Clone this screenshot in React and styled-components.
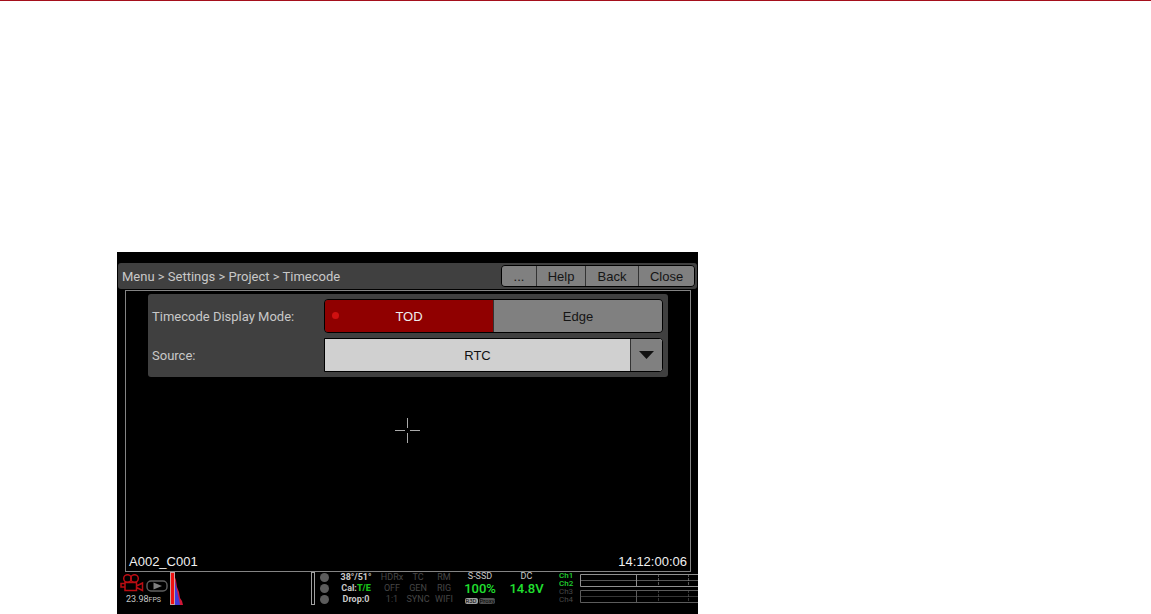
import styled, { createGlobalStyle, css } from "styled-components"

export default function App(){
    return(
        <Page>
            <GlobalStyle/>
            <Monitor>
                <TitleBar>
                    <h1>Menu &gt; Settings &gt; Project &gt; Timecode</h1>
                    <NavButtons>
                        <NavButton $width="34px">...</NavButton>
                        <NavButton $width="48px">Help</NavButton>
                        <NavButton $width="52px">Back</NavButton>
                        <NavButton $width="55px">Close</NavButton>
                    </NavButtons>
                </TitleBar>
                <Frame>
                    <Settings>
                        <Label id="mode">Timecode Display Mode:</Label>
                        <Modes role="group" aria-labelledby="mode">
                            <ModeButton $active aria-pressed="true"><Led/>TOD</ModeButton>
                            <ModeButton aria-pressed="false">Edge</ModeButton>
                        </Modes>
                        <Label as="label" htmlFor="source">Source:</Label>
                        <SelectBox>
                            <Select id="source" defaultValue="RTC">
                                <option>RTC</option>
                            </Select>
                            <ArrowBox>
                                <svg width="15" height="8" viewBox="0 0 15 8"><path d="M0 0H15L7.5 8Z" fill="#111"/></svg>
                            </ArrowBox>
                        </SelectBox>
                    </Settings>
                    <Crosshair/>
                    <ClipInfo>
                        <span>A002_C001</span>
                        <span>14:12:00:06</span>
                    </ClipInfo>
                </Frame>
                <StatusBar>
                    <Media>
                        <div>
                            <CameraIcon/>
                            <PlayIcon/>
                        </div>
                        <p>23.98<small>FPS</small></p>
                    </Media>
                    <Histogram/>
                    <Dots>
                        <i/>
                        <i/>
                        <i/>
                    </Dots>
                    <Column $bold>
                        <span>38°/51°</span>
                        <span>Cal:<Green>T/E</Green></span>
                        <span>Drop:0</span>
                    </Column>
                    <Column $dim>
                        <span>HDRx</span>
                        <span>OFF</span>
                        <span>1:1</span>
                    </Column>
                    <Column $dim>
                        <span>TC</span>
                        <span>GEN</span>
                        <span>SYNC</span>
                    </Column>
                    <Column $dim>
                        <span>RM</span>
                        <span>RIG</span>
                        <span>WIFI</span>
                    </Column>
                    <Reading>
                        <span>S-SSD</span>
                        <strong>100%</strong>
                        <Badges>
                            <Badge $on>R3D</Badge>
                            <Badge>Proxy</Badge>
                        </Badges>
                    </Reading>
                    <Reading>
                        <span>DC</span>
                        <strong>14.8V</strong>
                    </Reading>
                    <Channels>
                        <Channel $on>Ch1</Channel>
                        <Channel $on>Ch2</Channel>
                        <Channel>Ch3</Channel>
                        <Channel>Ch4</Channel>
                    </Channels>
                    <Meters>
                        <Meter color="#909090"/>
                        <Meter color="#5c5c5c"/>
                    </Meters>
                </StatusBar>
            </Monitor>
        </Page>
    )
}

function CameraIcon(){
    return(
        <svg width="24" height="18" viewBox="0 0 24 18" fill="none" stroke="#b80c12" strokeWidth="1.5">
            <circle cx="7.5" cy="4.5" r="3.8"/>
            <circle cx="14.5" cy="4.5" r="3.8"/>
            <path d="M5 8.5V16.5H16.5V8.5Z M5 9.5H1V13H5 M16.5 12L22.5 9V16.5L16.5 13.5"/>
        </svg>
    )
}

function PlayIcon(){
    return(
        <svg width="22" height="12" viewBox="0 0 22 12">
            <rect x="1" y="1" width="20" height="10" rx="4" fill="none" stroke="#606060" strokeWidth="1.4"/>
            <path d="M7.5 2.5L16 6L7.5 9.5Z" fill="#808080"/>
        </svg>
    )
}

function Histogram(){
    return(
        <svg width="146" height="34" viewBox="0 0 146 34">
            <path d="M4 3L6 8L7 15L9 20L10 26L12 29L13 33H4Z" fill="#d01838"/>
            <path d="M4 4L5 9L6 14L7 18L8 23L9 27L10 33H4Z" fill="#4038d8"/>
            <rect x=".5" y=".5" width="4" height="32" fill="#f01010" stroke="#c8a0a0"/>
            <rect x="141.5" y=".5" width="3" height="32" fill="none" stroke="#a0a0a0"/>
        </svg>
    )
}

function Meter({ color }){
    return(
        <svg width="100%" height="13">
            <path d="M200 .5H.5V12.5H200" fill="none" stroke={color}/>
            <path d="M0 6.5H200" stroke={color} opacity=".6"/>
            <path d="M56.5 0V13" stroke={color}/>
            <path d="M78.5 0V13M108.5 0V13" stroke={color} strokeDasharray="3 1" opacity=".6"/>
        </svg>
    )
}

const GlobalStyle = createGlobalStyle`
    * {
        box-sizing: border-box;
        margin: 0;
    }
    body {
        background-color: #fff;
    }
    button, select {
        font-family: "Liberation Sans", Arial, sans-serif;
        font-size: 13px;
        border: none;
        padding: 0;
        cursor: pointer;
    }
    svg {
        display: block;
    }
`

const Page = styled.div`
    border-top: 1px solid #a50f1c;
    padding: 251px 20px 0 117px;
    font-family: "Liberation Sans", Arial, sans-serif;
`

const Monitor = styled.main`
    max-width: 581px;
    padding-top: 11px;
    background-color: #000;
    color: #c8c8c8;
`

const TitleBar = styled.header`
    display: flex;
    justify-content: space-between;
    align-items: center;
    height: 26px;
    margin: 0 1px;
    padding: 0 2px 0 4px;
    border-radius: 3px;
    background-color: #404040;
    h1 {
        font-family: Roboto, sans-serif;
        font-size: 13px;
        font-weight: 400;
    }
`

const NavButtons = styled.nav`
    display: flex;
    gap: 1px;
    height: 22px;
    border: 1px solid #000;
    border-radius: 4px;
    background-color: #333;
    overflow: hidden;
`

const NavButton = styled.button`
    width: ${props => props.$width};
    background-color: #808080;
    color: #151515;
`

const Frame = styled.section`
    display: flex;
    flex-direction: column;
    align-items: center;
    height: 282px;
    margin: 1px 7px 0 8px;
    padding-top: 3px;
    border: 1px solid #848484;
`

const Settings = styled.div`
    display: grid;
    grid-template-columns: 172px 1fr;
    align-items: center;
    row-gap: 5px;
    width: calc(100% - 44px);
    padding: 5px 5px 5px 4px;
    border-radius: 3px;
    background-color: #404040;
`

const Label = styled.span`
    font-family: Roboto, sans-serif;
    font-size: 13px;
`

const control = css`
    height: 34px;
    border: 1px solid #000;
    border-radius: 4px;
    overflow: hidden;
`

const Modes = styled.div`
    ${control}
    display: grid;
    grid-template-columns: 1fr 1fr;
    gap: 1px;
    background-color: #333;
`

const ModeButton = styled.button`
    position: relative;
    background-color: ${props => props.$active ? "#900000" : "#808080"};
    color: ${props => props.$active ? "#eee" : "#151515"};
`

const Led = styled.i`
    position: absolute;
    top: 12px;
    left: 7px;
    width: 7px;
    height: 7px;
    border-radius: 50%;
    background-color: #d01010;
`

const SelectBox = styled.div`
    ${control}
    position: relative;
    border-radius: 0 4px 4px 0;
`

const Select = styled.select`
    appearance: none;
    width: 100%;
    height: 100%;
    padding-right: 32px;
    border-radius: 0;
    background-color: #d0d0d0;
    color: #111;
    text-align-last: center;
`

const ArrowBox = styled.span`
    position: absolute;
    top: 0;
    right: 0;
    display: flex;
    justify-content: center;
    align-items: center;
    width: 32px;
    height: 100%;
    border-left: 1px solid #333;
    background-color: #808080;
    pointer-events: none;
`

const Crosshair = styled.div`
    width: 26px;
    height: 25px;
    margin-top: 41px;
    background:
        linear-gradient(#aaa, #aaa) 12px 0 / 1px 10px,
        linear-gradient(#aaa, #aaa) 12px 15px / 1px 10px,
        linear-gradient(#aaa, #aaa) 0 12px / 10px 1px,
        linear-gradient(#aaa, #aaa) 15px 12px / 10px 1px;
    background-repeat: no-repeat;
`

const ClipInfo = styled.div`
    display: flex;
    justify-content: space-between;
    width: 100%;
    margin-top: auto;
    padding: 0 3px 1px;
    color: #f0f0f0;
    font-size: 13px;
    line-height: 16px;
`

const StatusBar = styled.footer`
    display: grid;
    grid-template-columns: 53px 146px 17px 46px 26px 26px 26px 46px 47px 30px 1fr;
    height: 42px;
    font-family: Roboto, sans-serif;
    font-size: 9px;
    overflow: hidden;
`

const Media = styled.div`
    padding: 2px 0 0 3px;
    div {
        display: flex;
        align-items: flex-end;
        gap: 2px;
    }
    p {
        margin-top: 2px;
        padding-right: 3px;
        text-align: center;
        line-height: 10px;
    }
    small {
        font-size: 7px;
    }
`

const Dots = styled.div`
    display: flex;
    flex-direction: column;
    align-items: center;
    gap: 2px;
    padding-top: 1px;
    i {
        width: 9px;
        height: 9px;
        border-radius: 50%;
        background-color: #5c5c5c;
    }
`

const Column = styled.div`
    display: flex;
    flex-direction: column;
    align-items: center;
    line-height: 11px;
    white-space: nowrap;
    font-weight: ${props => props.$bold ? 700 : 400};
    color: ${props => props.$dim ? "#464646" : "#c8c8c8"};
`

const Green = styled.b`
    color: #18c018;
`

const Reading = styled.div`
    display: flex;
    flex-direction: column;
    align-items: center;
    line-height: 9px;
    strong {
        color: #20e030;
        font-size: 13px;
        font-weight: 500;
        line-height: 15px;
    }
`

const Badges = styled.div`
    display: flex;
    gap: 1px;
    margin-top: 2px;
`

const Badge = styled.span`
    padding: 0 1px;
    border-radius: 2px;
    background-color: ${props => props.$on ? "#a0a0a0" : "#505050"};
    color: #000;
    font-size: 6px;
    line-height: 6px;
`

const Channels = styled.div`
    display: flex;
    flex-direction: column;
    padding-left: 9px;
    font-size: 8px;
    line-height: 8px;
`

const Channel = styled.span`
    color: ${props => props.$on ? "#20d030" : "#464646"};
    font-weight: ${props => props.$on ? 500 : 400};
`

const Meters = styled.div`
    display: flex;
    flex-direction: column;
    gap: 3px;
    padding-top: 2px;
`
